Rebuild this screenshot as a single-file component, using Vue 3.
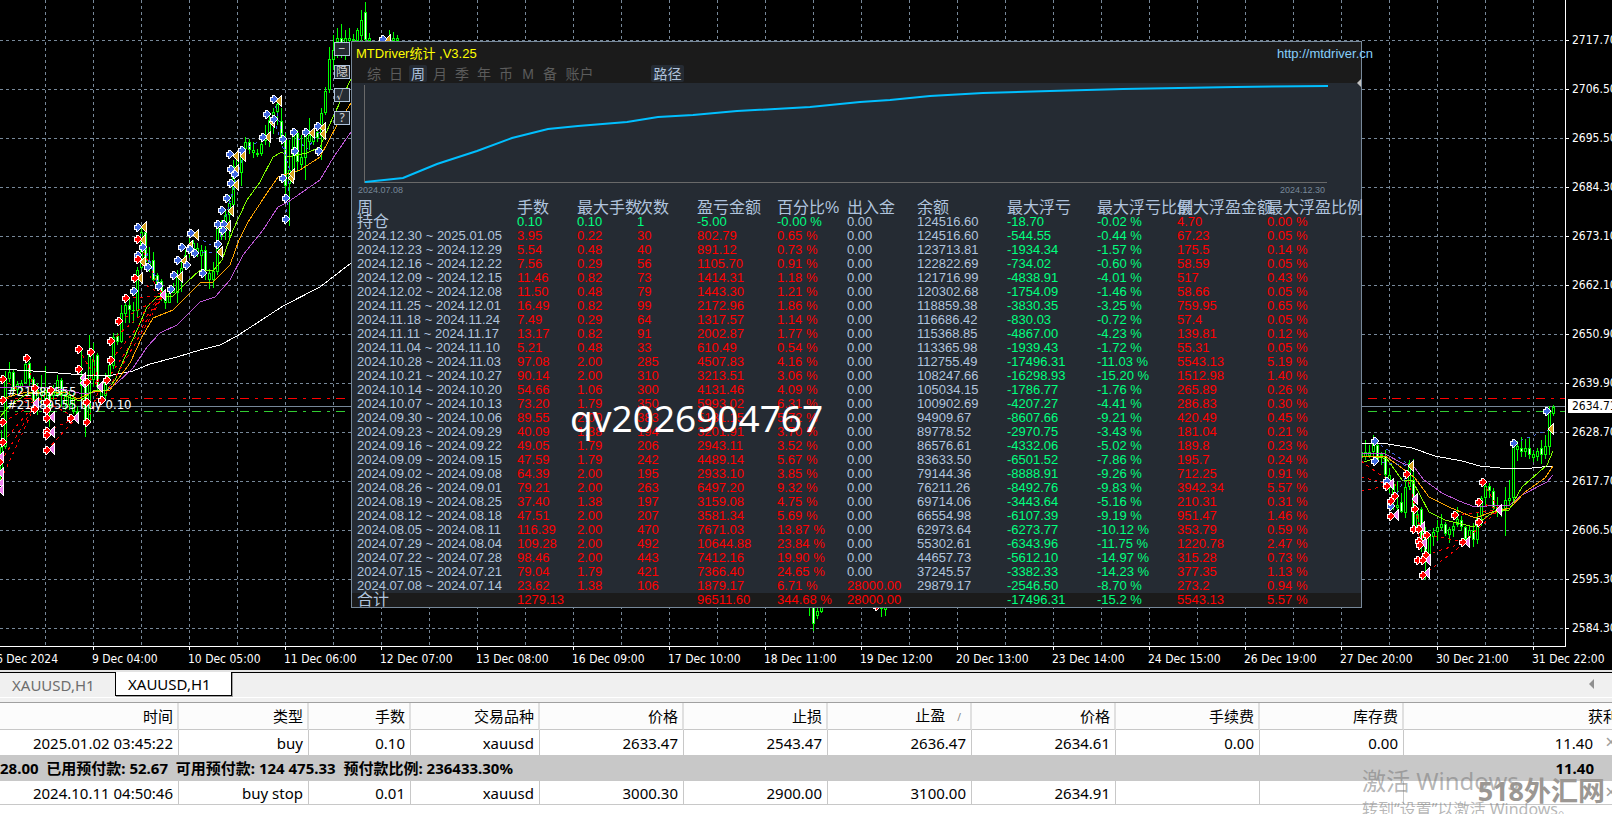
<template>
  <div class="terminal">
    <main class="chart">
      <div class="chart__body">
        <svg class="chart__plot" aria-hidden="true">
          <g class="grid">
            <line v-for="x in gridX" :key="'x' + x" :x1="x" :x2="x" y1="0" y2="100%" />
            <line v-for="y in gridY" :key="'y' + y" x1="0" x2="100%" :y1="y" :y2="y" />
          </g>
          <g class="levels">
            <line class="level level--stop" x1="0" x2="100%" y1="398" y2="398" />
            <line class="level level--price" x1="0" x2="100%" y1="406" y2="406" />
            <line class="level level--order" x1="0" x2="100%" y1="411" y2="411" />
          </g>
          <g v-for="c in candles" :key="'c' + c.x">
            <rect :x="c.x" :y="c.high" width="1" :height="c.low - c.high" fill="#00ff00" />
            <rect :x="c.x - 1" :y="c.top" width="3" :height="c.size" fill="#00ff00" />
            <rect :x="c.x" :y="c.top + 1" width="1" :height="Math.max(c.size - 2, 0)" :fill="c.down ? '#ffffff' : '#000000'" />
          </g>
          <polyline v-for="(m, i) in averages" :key="'m' + i" class="average" :points="m.points" :stroke="m.color" />
          <polyline v-for="(t, i) in trades" :key="'t' + i" class="trade" :points="t.points" :stroke="t.color" />
          <text x="7" y="396" class="order-label">#21489555</text>
          <text x="7" y="409" class="order-label">#21489555 buy 0.10</text>
          <path v-for="(p, i) in exits" :key="'e' + i" class="mark" d="M-3 0L2 -5V5Z" :fill="p.color" :transform="`translate(${p.x} ${p.y})`" />
          <path v-for="(p, i) in entries" :key="'n' + i" class="mark" d="M-4 -2H-2V-4H0L4 0L0 4H-2V2H-4Z" :fill="p.color" :transform="`translate(${p.x} ${p.y})`" />
        </svg>
        <ul class="prices">
          <li v-for="p in prices" :key="p">{{ p }}</li>
          <li class="prices__current">2634.71</li>
        </ul>
      </div>
      <ul class="times">
        <li v-for="t in times" :key="t">{{ t }}</li>
      </ul>

      <div class="tools">
        <button v-for="t in tools" :key="t" type="button">{{ t }}</button>
      </div>

      <section class="panel">
        <header class="panel__head">
          <div class="panel__title">
            <h1>MTDriver统计 ,V3.25</h1>
            <a href="http://mtdriver.cn">http://mtdriver.cn</a>
          </div>
          <nav class="panel__tabs">
            <button
              v-for="t in tabs"
              :key="t"
              type="button"
              :class="{ active: t === period, wide: t.length > 1 }"
              @click="period = t"
            >{{ t }}</button>
            <button type="button" class="wide active path">路径</button>
          </nav>
        </header>
        <svg class="panel__curve" viewBox="0 0 1009 101" preserveAspectRatio="none" aria-hidden="true">
          <path d="M12 2V99H975" class="axis" />
          <polyline :points="equity" class="equity" />
        </svg>
        <svg class="panel__handle" width="4" height="8" aria-hidden="true"><path d="M4 0V8L0 4Z" fill="#c0c0c0" /></svg>
        <div class="panel__dates"><span>2024.07.08</span><span>2024.12.30</span></div>
        <table class="stats">
          <colgroup><col v-for="(w, i) in [165, 60, 60, 60, 80, 70, 70, 90, 90, 80, 90]" :key="i" :style="{ width: w + 'px' }"><col></colgroup>
          <thead>
            <tr><th v-for="h in heads" :key="h" scope="col">{{ h }}</th></tr>
          </thead>
          <tbody>
            <tr v-for="r in rows" :key="r[0]">
              <td v-for="(v, i) in r" :key="i" :class="tone(r, v, i)">{{ v }}</td>
            </tr>
          </tbody>
        </table>
      </section>
      <div class="contact">qv2026904767</div>
    </main>

    <section class="orders">
      <nav class="orders__tabs">
        <button type="button">XAUUSD,H1</button>
        <button type="button" class="active">XAUUSD,H1</button>
        <svg width="6" height="10" aria-hidden="true"><path d="M5 0V10L0 5Z" fill="#909090" /></svg>
      </nav>
      <table class="book">
        <colgroup><col v-for="(w, i) in [179, 130, 102, 129, 144, 144, 144, 144, 144, 144]" :key="i" :style="{ width: w + 'px' }"><col></colgroup>
        <thead>
          <tr>
            <th scope="col">时间</th>
            <th scope="col">类型</th>
            <th scope="col">手数</th>
            <th scope="col">交易品种</th>
            <th scope="col">价格</th>
            <th scope="col">止损</th>
            <th scope="col">止盈<span class="sort">/</span></th>
            <th scope="col">价格</th>
            <th scope="col">手续费</th>
            <th scope="col">库存费</th>
            <th scope="col">获利</th>
          </tr>
        </thead>
        <tbody>
          <tr>
            <td v-for="(v, i) in position" :key="i">{{ v }}</td>
            <td>11.40<button type="button" aria-label="Close">×</button></td>
          </tr>
          <tr class="book__summary">
            <td colspan="10">28.00&nbsp; 已用预付款: 52.67&nbsp; 可用预付款: 124 475.33&nbsp; 预付款比例: 236433.30%</td>
            <td>11.40<span class="spacer"></span></td>
          </tr>
          <tr class="book__pending">
            <td v-for="(v, i) in pending" :key="i">{{ v }}</td>
            <td><button type="button" aria-label="Delete">×</button></td>
          </tr>
        </tbody>
      </table>
      <div class="activate">
        <p>激活 Windows</p>
        <p>转到“设置”以激活 Windows。</p>
      </div>
      <div class="site">518外汇网</div>
    </section>
  </div>
</template>

<script setup>
import { ref } from 'vue'

const period = ref('周')
const tools = ['−', '隐', '√', '?']
const tabs = ['综', '日', '周', '月', '季', '年', '币', 'M', '备', '账户']

const gridX = Array.from({ length: 60 }, (_, i) => 45 + i * 48)
const gridY = Array.from({ length: 30 }, (_, i) => 40 + i * 49)

const prices = ['2717.70', '2706.50', '2695.50', '2684.30', '2673.10', '2662.10', '2650.90', '2639.90', '2628.70', '2617.70', '2606.50', '2595.30', '2584.30']
const times = [
  '6 Dec 2024', '9 Dec 04:00', '10 Dec 05:00', '11 Dec 06:00', '12 Dec 07:00', '13 Dec 08:00',
  '16 Dec 09:00', '17 Dec 10:00', '18 Dec 11:00', '19 Dec 12:00', '20 Dec 13:00', '23 Dec 14:00',
  '24 Dec 15:00', '26 Dec 19:00', '27 Dec 20:00', '30 Dec 21:00', '31 Dec 22:00',
]

// x, high, low, body top, body bottom, 1 = bearish
const candles = [
  [1, 430, 482, 447, 480], [5, 371, 449, 380, 447], [9, 362, 382, 372, 379], [13, 370, 395, 372, 390, 1],
  [17, 381, 394, 384, 390], [21, 380, 394, 383, 387], [25, 358, 384, 364, 383], [29, 361, 386, 363, 379, 1],
  [33, 377, 407, 379, 403, 1], [37, 383, 415, 390, 402], [41, 375, 403, 392, 396], [45, 366, 408, 390, 402],
  [49, 386, 427, 392, 410, 1], [53, 385, 400, 389, 396], [57, 375, 397, 380, 395], [61, 378, 407, 380, 396, 1],
  [65, 390, 410, 394, 404], [69, 391, 410, 395, 405], [73, 393, 414, 398, 411], [77, 406, 421, 412, 419, 1],
  [81, 350, 407, 376, 386], [85, 373, 437, 380, 421, 1], [89, 335, 424, 355, 422], [93, 343, 387, 360, 380],
  [97, 353, 391, 355, 387, 1], [101, 386, 402, 388, 400], [105, 373, 400, 380, 396], [109, 357, 380, 365, 377],
  [113, 333, 369, 337, 366], [117, 333, 345, 336, 342, 1], [121, 305, 343, 313, 342], [125, 295, 323, 305, 314],
  [129, 297, 323, 305, 310, 1], [133, 302, 323, 310, 311], [137, 267, 317, 270, 311], [141, 228, 270, 232, 268],
  [145, 222, 270, 232, 262, 1], [149, 247, 272, 262, 268], [153, 252, 282, 260, 280, 1], [157, 273, 286, 275, 284, 1],
  [161, 279, 301, 281, 296, 1], [165, 289, 309, 293, 303], [169, 289, 303, 293, 303], [173, 283, 293, 290, 293],
  [177, 270, 303, 275, 293], [181, 262, 292, 268, 278], [185, 250, 268, 255, 266], [189, 236, 258, 244, 250],
  [193, 240, 252, 243, 250], [197, 243, 257, 248, 254], [201, 245, 274, 250, 256], [205, 246, 280, 250, 271, 1],
  [209, 269, 289, 273, 280], [213, 262, 288, 271, 280], [217, 222, 275, 227, 272], [221, 220, 240, 224, 236],
  [225, 210, 240, 215, 230], [229, 195, 240, 203, 215], [233, 160, 210, 166, 205], [237, 152, 175, 156, 168],
  [241, 150, 186, 157, 173], [245, 137, 152, 142, 149], [249, 139, 154, 142, 150, 1], [253, 142, 158, 150, 153],
  [257, 149, 157, 153, 155], [261, 141, 156, 144, 154], [265, 125, 145, 137, 141], [269, 115, 147, 120, 135],
  [273, 108, 134, 112, 120], [277, 100, 125, 104, 112], [281, 108, 145, 121, 140, 1], [285, 133, 200, 138, 186, 1],
  [289, 140, 226, 170, 184], [293, 130, 175, 133, 170], [297, 130, 172, 133, 162, 1], [301, 135, 170, 157, 165],
  [305, 128, 180, 133, 158], [309, 118, 150, 135, 142], [313, 130, 145, 133, 142], [317, 127, 142, 132, 138, 1],
  [321, 108, 160, 113, 136], [325, 87, 115, 91, 113], [329, 47, 93, 59, 90], [333, 35, 70, 50, 60],
  [337, 28, 58, 38, 42], [341, 24, 58, 38, 46, 1], [345, 30, 60, 38, 44], [349, 28, 42, 38, 41],
  [353, 34, 42, 39, 41], [357, 28, 42, 30, 41], [361, 10, 42, 20, 36], [365, 2, 42, 12, 40, 1],
  [369, 33, 42, 38, 41], [389, 30, 42, 38, 41], [393, 32, 42, 38, 41], [397, 35, 42, 38, 41],
  [809, 600, 616, 602, 606], [813, 600, 631, 602, 624, 1], [817, 606, 619, 611, 616], [821, 600, 613, 602, 612],
  [881, 600, 617, 602, 609], [885, 600, 616, 602, 610],
  [1361, 445, 460, 452, 458], [1365, 440, 460, 452, 457], [1369, 445, 458, 452, 456], [1373, 435, 457, 440, 452],
  [1377, 442, 463, 445, 460, 1], [1381, 452, 465, 454, 456], [1385, 450, 482, 456, 475, 1], [1389, 468, 493, 475, 488],
  [1393, 480, 510, 484, 500], [1397, 481, 510, 505, 508], [1401, 493, 513, 502, 512, 1], [1405, 480, 518, 487, 513],
  [1409, 460, 490, 463, 487], [1413, 459, 530, 480, 526, 1], [1417, 508, 533, 514, 528], [1421, 507, 552, 509, 546, 1],
  [1425, 527, 580, 535, 562, 1], [1429, 533, 560, 536, 559], [1433, 528, 546, 532, 537], [1437, 520, 541, 527, 532],
  [1441, 514, 530, 524, 528], [1445, 522, 536, 524, 534, 1], [1449, 527, 543, 529, 535], [1453, 523, 537, 526, 530],
  [1457, 507, 527, 519, 525], [1461, 516, 531, 520, 527, 1], [1465, 526, 543, 527, 539, 1], [1469, 525, 543, 530, 538],
  [1473, 523, 547, 530, 540, 1], [1477, 513, 544, 518, 540], [1481, 496, 526, 498, 516], [1485, 483, 505, 486, 498],
  [1489, 483, 498, 486, 491, 1], [1493, 488, 510, 491, 508, 1], [1497, 497, 517, 507, 513, 1], [1501, 505, 517, 508, 512],
  [1505, 487, 536, 500, 511], [1509, 480, 505, 498, 501], [1513, 440, 502, 444, 498], [1517, 441, 461, 446, 450],
  [1521, 437, 457, 448, 452, 1], [1525, 439, 457, 448, 452], [1529, 438, 459, 448, 455, 1], [1533, 451, 462, 454, 458],
  [1537, 448, 461, 451, 457], [1541, 440, 464, 448, 455, 1], [1545, 435, 459, 446, 455], [1549, 406, 455, 411, 447],
  [1553, 405, 416, 407, 414],
].map(([x, high, low, top, bottom, down]) => ({ x, high, low, top, size: bottom - top, down: !!down }))

const averages = [
  { color: '#ffffff', points: '0,369 33,371 83,375 113,375 133,371 150,364 177,357 200,350 220,345 237,336 260,321 283,306 320,287 351,263' },
  { color: '#ba55d3', points: '0,388 30,386 67,390 83,394 107,390 117,383 133,368 147,347 160,333 177,325 200,302 215,297 230,280 243,255 255,240 263,230 278,207 288,202 320,180 333,158 351,132' },
  { color: '#ffa500', points: '0,399 27,392 67,393 78,399 93,392 110,390 130,363 142,337 153,318 173,310 200,283 213,282 230,265 239,240 248,222 267,193 278,177 300,170 320,157 337,125 351,103' },
  { color: '#7fff00', points: '0,417 10,405 27,394 53,392 68,397 80,401 93,391 107,390 115,380 125,357 137,330 147,307 157,297 173,296 187,282 200,270 213,271 222,260 233,230 247,200 260,182 273,157 282,152 288,157 307,153 320,147 333,117 351,79' },
  { color: '#ffffff', points: '1361,443 1382,443 1412,448 1435,456 1462,461 1480,466 1510,469 1532,468 1553,466' },
  { color: '#ba55d3', points: '1361,453 1385,454 1402,463 1414,467 1424,480 1442,493 1459,501 1475,507 1499,505 1510,505 1522,495 1547,482 1553,475' },
  { color: '#ffa500', points: '1361,457 1385,456 1402,468 1415,478 1429,497 1449,507 1475,518 1492,512 1510,508 1525,492 1545,478 1553,466' },
  { color: '#7fff00', points: '1361,463 1379,457 1387,459 1402,480 1412,480 1429,512 1445,520 1474,527 1485,518 1495,511 1509,510 1522,487 1547,465 1553,451' },
]

const red = '#ff0000'
const blue = '#4169e1'
const trades = [
  ...[[138, 239], [138, 258], [135, 278], [126, 298], [119, 321], [111, 341], [111, 360], [107, 380], [102, 400]].map((p) => ({ color: red, points: `${p} 163,296` })),
  ...[[3, 379], [3, 400], [3, 422], [3, 442], [1, 462], [1, 480]].map((p) => ({ color: red, points: `${p} 36,403` })),
  ...[[47, 402], [47, 431], [47, 450]].map((p) => ({ color: red, points: `${p} 76,418` })),
  ...[[27, 358], [51, 390]].map((p) => ({ color: red, points: `${p} 36,403` })),
  ...[[79, 349], [79, 369], [91, 352], [87, 422]].map((p) => ({ color: red, points: `${p} 100,387` })),
  ...[[1426, 555], [1423, 575], [1427, 535]].map((p) => ({ color: red, points: `${p} 1466,542` })),
  ...[[1463, 542], [1455, 515], [1479, 522], [1479, 502], [1483, 482]].map((p) => ({ color: red, points: `${p} 1499,510` })),
  ...[[1361, 461], [1361, 477], [1361, 491]].map((p) => ({ color: red, points: `${p} 1396,${p[1] > 480 ? 484 : 486}` })),
  ...[[1407, 474], [1415, 509], [1414, 529]].map((p) => ({ color: red, points: `${p} 1424,543` })),
  ...['138,227 153,270 163,295', '143,247 159,286', '191,233 216,248', '195,253 219,252', '218,244 231,198 243,156', '242,150 268,137', '274,99 283,139 291,178', '286,219 289,178', '294,132 306,150 323,128', '274,119 291,174', '1375,441 1411,466', '1375,461 1411,466', '1391,506 1411,466', '1514,443 1551,429'].map((points) => ({ color: blue, points })),
]

const mark = (color, list) => list.map(([x, y]) => ({ x, y, color }))
const exits = [
  ...mark('#daa520', [[144, 227], [143, 240], [196, 235], [190, 246], [220, 252], [228, 226], [231, 211], [236, 185], [236, 170], [236, 156], [243, 156], [268, 137], [272, 122], [279, 101], [291, 178], [292, 174], [312, 133], [323, 128], [323, 134], [143, 262], [140, 278], [180, 277], [184, 261], [388, 40], [1411, 466], [1551, 429]]),
  ...mark('#ee82ee', [[163, 295], [100, 387], [83, 378], [83, 383], [76, 418], [52, 417], [52, 432], [52, 449], [36, 403], [1, 457], [1, 473], [1, 483], [1, 490], [1391, 484], [1396, 515], [1415, 499], [1422, 527], [1424, 543], [1428, 560], [1427, 573], [1467, 542], [1499, 510]]),
]
const entries = [
  ...mark(blue, [[138, 227], [143, 247], [138, 255], [191, 233], [182, 247], [190, 249], [195, 253], [178, 260], [218, 224], [224, 224], [223, 230], [218, 244], [222, 210], [227, 198], [231, 183], [235, 174], [231, 169], [230, 154], [242, 150], [263, 137], [267, 114], [274, 99], [274, 119], [283, 139], [283, 178], [286, 198], [286, 219], [294, 132], [295, 151], [306, 132], [318, 126], [319, 151], [148, 267], [134, 291], [159, 286], [171, 289], [174, 275], [187, 265], [203, 273], [383, 39], [1375, 441], [1375, 461], [1387, 481], [1391, 506], [1514, 443], [1547, 411]]),
  ...mark(red, [[138, 239], [138, 259], [135, 278], [126, 298], [119, 321], [111, 341], [111, 360], [107, 380], [102, 400], [91, 352], [79, 349], [79, 369], [87, 382], [87, 402], [87, 422], [71, 418], [27, 358], [35, 388], [35, 409], [51, 390], [47, 402], [47, 410], [47, 418], [47, 431], [47, 435], [47, 450], [3, 379], [3, 400], [3, 422], [3, 442], [0, 462], [877, 606], [1387, 486], [1395, 496], [1391, 501], [1391, 516], [1407, 474], [1415, 509], [1414, 529], [1419, 529], [1427, 535], [1419, 541], [1420, 545], [1426, 555], [1418, 560], [1423, 560], [1423, 575], [1463, 542], [1455, 515], [1479, 522], [1479, 502], [1483, 482]]),
]

const equity = '13,99 51,95 85,81 125,68 160,55 196,46 226,43 275,39 306,34 341,32 385,28 458,24 508,19 538,17 578,13 631,10 698,8 771,6 883,4 976,3'

const heads = ['周', '手数', '最大手数', '次数', '盈亏金额', '百分比%', '出入金', '余额', '最大浮亏', '最大浮亏比例', '最大浮盈金额', '最大浮盈比例']
const rows = `持仓|0.10|0.10|1|-5.00|-0.00 %|0.00|124516.60|-18.70|-0.02 %|4.70|0.00 %
2024.12.30 ~ 2025.01.05|3.95|0.22|30|802.79|0.65 %|0.00|124516.60|-544.55|-0.44 %|67.23|0.05 %
2024.12.23 ~ 2024.12.29|5.54|0.48|40|891.12|0.73 %|0.00|123713.81|-1934.34|-1.57 %|175.5|0.14 %
2024.12.16 ~ 2024.12.22|7.56|0.29|56|1105.70|0.91 %|0.00|122822.69|-734.02|-0.60 %|58.59|0.05 %
2024.12.09 ~ 2024.12.15|11.46|0.82|73|1414.31|1.18 %|0.00|121716.99|-4838.91|-4.01 %|517|0.43 %
2024.12.02 ~ 2024.12.08|11.50|0.48|79|1443.30|1.21 %|0.00|120302.68|-1754.09|-1.46 %|58.66|0.05 %
2024.11.25 ~ 2024.12.01|16.49|0.82|99|2172.96|1.86 %|0.00|118859.38|-3830.35|-3.25 %|759.95|0.65 %
2024.11.18 ~ 2024.11.24|7.49|0.29|64|1317.57|1.14 %|0.00|116686.42|-830.03|-0.72 %|57.4|0.05 %
2024.11.11 ~ 2024.11.17|13.17|0.82|91|2002.87|1.77 %|0.00|115368.85|-4867.00|-4.23 %|139.81|0.12 %
2024.11.04 ~ 2024.11.10|5.21|0.48|33|610.49|0.54 %|0.00|113365.98|-1939.43|-1.72 %|55.31|0.05 %
2024.10.28 ~ 2024.11.03|97.08|2.00|285|4507.83|4.16 %|0.00|112755.49|-17496.31|-11.03 %|5543.13|5.19 %
2024.10.21 ~ 2024.10.27|90.14|2.00|310|3213.51|3.06 %|0.00|108247.66|-16298.93|-15.20 %|1512.98|1.40 %
2024.10.14 ~ 2024.10.20|54.66|1.06|300|4131.46|4.09 %|0.00|105034.15|-1786.77|-1.76 %|265.89|0.26 %
2024.10.07 ~ 2024.10.13|73.20|1.79|350|5993.02|6.31 %|0.00|100902.69|-4207.27|-4.41 %|286.83|0.30 %
2024.09.30 ~ 2024.10.06|89.55|2.00|383|5131.15|5.72 %|0.00|94909.67|-8607.66|-9.21 %|420.49|0.45 %
2024.09.23 ~ 2024.09.29|40.09|1.38|194|3201.91|3.70 %|0.00|89778.52|-2970.75|-3.43 %|181.04|0.21 %
2024.09.16 ~ 2024.09.22|49.05|1.79|206|2943.11|3.52 %|0.00|86576.61|-4332.06|-5.02 %|189.8|0.23 %
2024.09.09 ~ 2024.09.15|47.59|1.79|242|4489.14|5.67 %|0.00|83633.50|-6501.52|-7.86 %|195.7|0.24 %
2024.09.02 ~ 2024.09.08|64.39|2.00|195|2933.10|3.85 %|0.00|79144.36|-8888.91|-9.26 %|712.25|0.91 %
2024.08.26 ~ 2024.09.01|79.21|2.00|263|6497.20|9.32 %|0.00|76211.26|-8492.76|-9.83 %|3942.34|5.57 %
2024.08.19 ~ 2024.08.25|37.40|1.38|197|3159.08|4.75 %|0.00|69714.06|-3443.64|-5.16 %|210.31|0.31 %
2024.08.12 ~ 2024.08.18|47.51|2.00|207|3581.34|5.69 %|0.00|66554.98|-6107.39|-9.19 %|951.47|1.46 %
2024.08.05 ~ 2024.08.11|116.39|2.00|470|7671.03|13.87 %|0.00|62973.64|-6273.77|-10.12 %|353.79|0.59 %
2024.07.29 ~ 2024.08.04|109.28|2.00|492|10644.88|23.84 %|0.00|55302.61|-6343.96|-11.75 %|1220.78|2.47 %
2024.07.22 ~ 2024.07.28|98.46|2.00|443|7412.16|19.90 %|0.00|44657.73|-5612.10|-14.97 %|315.28|0.73 %
2024.07.15 ~ 2024.07.21|79.04|1.79|421|7366.40|24.65 %|0.00|37245.57|-3382.33|-14.23 %|377.35|1.13 %
2024.07.08 ~ 2024.07.14|23.62|1.38|106|1879.17|6.71 %|28000.00|29879.17|-2546.50|-8.70 %|273.2|0.94 %
合计|1279.13|||96511.60|344.68 %|28000.00||-17496.31|-15.2 %|5543.13|5.57 %`.split('\n').map((r) => r.split('|'))

function tone(row, value, i) {
  if (i === 0 && value.length < 3) return 'label'
  if (i === 0 || i === 7 || (i === 6 && value === '0.00')) return ''
  if (i === 8 || i === 9) return 'down'
  if (row[0] === '持仓' && i < 6) return 'down'
  return 'up'
}

const position = ['2025.01.02 03:45:22', 'buy', '0.10', 'xauusd', '2633.47', '2543.47', '2636.47', '2634.61', '0.00', '0.00']
const pending = ['2024.10.11 04:50:46', 'buy stop', '0.01', 'xauusd', '3000.30', '2900.00', '3100.00', '2634.91', '', '']
</script>

<style>
body {
  background: #ffffff;
  overflow: hidden;
}
</style>

<style scoped>
.terminal {
  display: flex;
  flex-direction: column;
  height: 100vh;
  font-family: 'Noto Sans', 'Noto Sans CJK SC', sans-serif;
}

.terminal ul,
.terminal p,
.terminal h1 {
  margin: 0;
  padding: 0;
  list-style: none;
}

.terminal button {
  font-family: inherit;
  cursor: pointer;
}

/* Price chart */
.chart {
  position: relative;
  display: flex;
  flex-direction: column;
  flex: 1;
  min-height: 0;
  background: #000000;
  color: #ffffff;
  overflow: hidden;
}

.chart__body {
  display: flex;
  flex: 1;
  min-height: 0;
}

.chart__plot {
  flex: 1;
  min-width: 0;
  height: 100%;
  box-sizing: border-box;
  border-right: 1px solid #ffffff;
  border-bottom: 1px solid #ffffff;
}

.grid line {
  stroke: #778899;
  stroke-dasharray: 3 3;
  shape-rendering: crispEdges;
}

.level {
  shape-rendering: crispEdges;
}

.level--stop {
  stroke: #ff0000;
  stroke-dasharray: 9 6 3 6;
}

.level--price {
  stroke: #778899;
}

.level--order {
  stroke: #32cd32;
  stroke-dasharray: 9 6 3 6;
}

.average {
  fill: none;
  shape-rendering: crispEdges;
}

.trade {
  fill: none;
  stroke-dasharray: 3 4;
  shape-rendering: crispEdges;
}

.mark {
  stroke: #ffffff;
  shape-rendering: crispEdges;
}

.order-label {
  fill: #ffffff;
  font: 13px 'DejaVu Sans Condensed', 'DejaVu Sans', sans-serif;
}

.prices {
  position: relative;
  width: 46px;
  padding-top: 33px !important;
  overflow: hidden;
  font: 12px/14px 'DejaVu Sans Condensed', 'DejaVu Sans', sans-serif;
}

.prices li {
  height: 49px;
  padding-left: 6px;
  background: linear-gradient(#ffffff, #ffffff) 0 7px / 3px 1px no-repeat;
}

.prices .prices__current {
  position: absolute;
  top: 399px;
  left: 2px;
  width: 44px;
  height: 14px;
  padding-left: 4px;
  background: #ffffff;
  color: #000000;
}

.times {
  display: flex;
  height: 23px;
  margin-left: -4px !important;
  font: 12px/24px 'DejaVu Sans Condensed', 'DejaVu Sans', sans-serif;
}

.times li {
  flex: 0 0 96px;
  white-space: nowrap;
  background: linear-gradient(#ffffff, #ffffff) 1px 0 / 1px 3px no-repeat;
}

.tools {
  position: absolute;
  top: 42px;
  left: 334px;
  display: flex;
  flex-direction: column;
  gap: 9px;
}

.tools button {
  width: 16px;
  height: 14px;
  padding: 0;
  overflow: hidden;
  border: 1px solid #b0c4de;
  background: #252b33;
  color: #d3d3d3;
  font-size: 12px;
  line-height: 12px;
}

/* Statistics window over the chart */
.panel {
  position: absolute;
  top: 41px;
  left: 351px;
  right: 250px;
  border: 1px solid #778899;
  background: #252b33;
  color: #b0c4de;
  font-family: 'Liberation Sans', 'Noto Sans CJK SC', sans-serif;
  font-size: 13px;
}

.panel__head {
  height: 41px;
  background: #1b1b1b;
}

.panel__title {
  display: flex;
  justify-content: space-between;
  height: 23px;
  padding-left: 4px;
  margin-right: -12px;
  line-height: 23px;
  white-space: nowrap;
}

.panel__title h1 {
  color: #ffff00;
  font-size: 13px;
  font-weight: 400;
}

.panel__title a {
  color: #87cefa;
  text-decoration: none;
}

.panel__tabs {
  display: flex;
  gap: 4px;
  padding-left: 13px;
}

.panel__tabs button {
  width: 18px;
  height: 17px;
  padding: 0;
  border: 0;
  border-radius: 2px;
  background: none;
  color: #5c5c5c;
  font-size: 14px;
  line-height: 18px;
}

.panel__tabs .wide {
  width: 33px;
}

.panel__tabs .active {
  background: #252b33;
  color: #b0c4de;
}

.panel__tabs .path {
  margin-left: 51px;
}

.panel__curve {
  display: block;
  width: 100%;
  height: 101px;
}

.panel__handle {
  position: absolute;
  top: 37px;
  right: 0;
}

.axis {
  fill: none;
  stroke: #696969;
  shape-rendering: crispEdges;
}

.equity {
  fill: none;
  stroke: #00bfff;
  stroke-width: 2;
}

.panel__dates {
  display: flex;
  justify-content: space-between;
  height: 17px;
  padding: 0 36px 0 6px;
  color: #778899;
  font-size: 9px;
  line-height: 13px;
}

.stats {
  width: 100%;
  table-layout: fixed;
  border-collapse: collapse;
}

.stats th,
.stats td {
  height: 14px;
  padding: 0;
  font-weight: 400;
  line-height: 14px;
  text-align: left;
  white-space: nowrap;
}

.stats th,
.stats .label {
  font-size: 16px;
}

.stats th:first-child,
.stats td:first-child {
  padding-left: 5px;
}

.stats tbody tr:last-child td {
  background: #1b1b1b;
}

.stats .up {
  color: #ff0000;
}

.stats .down {
  color: #00ff7f;
}

.contact {
  position: absolute;
  top: 393px;
  left: 570px;
  color: #ffffff;
  font-size: 37px;
  line-height: 50px;
}

/* Orders */
.orders {
  position: relative;
  padding-bottom: 9px;
  border-top: 2px solid #e3e3e3;
  background: #ffffff;
  color: #000000;
  font-size: 15px;
  overflow: hidden;
}

.orders__tabs {
  display: flex;
  align-items: flex-start;
  height: 29px;
  border-top: 1px solid #000000;
  border-bottom: 1px solid #a0a0a0;
  background: linear-gradient(#ffffff, #ffffff) 0 24px / 100% 1px no-repeat #f0f0f0;
}

.orders__tabs button {
  width: 115px;
  height: 24px;
  padding: 0 0 0 12px;
  border: 0;
  background: none;
  color: #6d6d6d;
  font-size: 15px;
  line-height: 25px;
  text-align: left;
}

.orders__tabs .active {
  width: 117px;
  margin-top: -1px;
  border: 1px solid #000000;
  border-top: 0;
  background: #ffffff;
  color: #000000;
  box-shadow: 1px 1px 0 #a0a0a0;
}

.orders__tabs svg {
  margin: 6px 17px 0 auto;
}

.book {
  width: calc(100% + 12px);
  table-layout: fixed;
  border-collapse: separate;
  border-spacing: 0;
}

.book th,
.book td {
  box-sizing: border-box;
  height: 25px;
  padding: 0 5px 0 0;
  border-right: 1px solid #c8c8c8;
  font-weight: 400;
  line-height: 22px;
  text-align: right;
  white-space: nowrap;
}

.book th {
  height: 26px;
  padding-right: 4px;
  border-right: 2px solid #e0e0e0;
  border-bottom: 1px solid #c8c8c8;
  background: #fcfcfc;
  line-height: 24px;
}

.book .sort {
  margin: 0 5px 0 12px;
  color: #808080;
  font-size: 10px;
}

.book button {
  width: 14px;
  margin-left: 11px;
  padding: 0;
  border: 0;
  background: none;
  color: #a0a0a0;
  font-size: 20px;
  line-height: 20px;
  vertical-align: top;
}

.spacer {
  display: inline-block;
  width: 25px;
}

.book .book__summary td {
  height: 26px;
  border: 0;
  background: #c8c8c8;
  font-weight: 700;
}

.book .book__summary td:first-child {
  text-align: left;
}

.book .book__pending td {
  height: 24px;
  border-bottom: 1px solid #c8c8c8;
}

/* Overlays in the lower right corner */
.activate {
  position: absolute;
  right: 22px;
  bottom: -6px;
  width: 228px;
  color: rgba(120, 120, 120, 0.55);
  font-size: 16px;
  line-height: 22px;
  white-space: nowrap;
}

.activate p:first-child {
  font-size: 24px;
  line-height: 34px;
}

.site {
  position: absolute;
  right: 7px;
  bottom: 7px;
  color: #9b9793;
  font-size: 27px;
  font-weight: 700;
  line-height: 32px;
}
</style>
